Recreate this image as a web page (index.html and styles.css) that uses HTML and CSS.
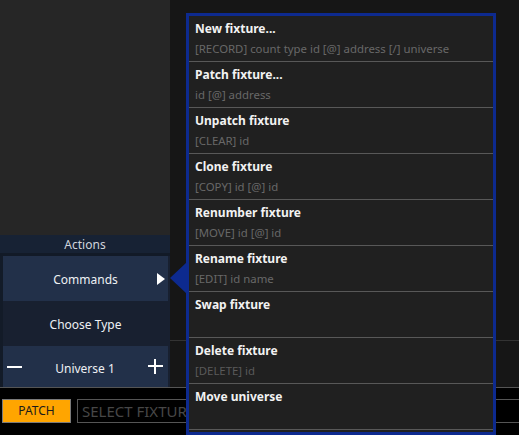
FILE: index.html
```html
<!DOCTYPE html>
<html>
<head>
<meta charset="utf-8">
<link rel="stylesheet" href="styles.css">
</head>
<body>
<div class="app">
  <div class="main">
    <div class="left">
      <div class="left-top"></div>
      <div class="actions">
        <div class="actions-head">Actions</div>
        <div class="actions-body">
          <div class="act act-hi">Commands<span class="tri"></span></div>
          <div class="act">Choose Type</div>
          <div class="act act-hi act-uni">
            <span class="minus"></span>
            <span>Universe 1</span>
            <span class="plus"></span>
          </div>
        </div>
      </div>
    </div>
    <div class="right">
      <div class="right-top"></div>
      <div class="right-bottom"></div>
    </div>
  </div>
  <div class="bottombar">
    <div class="patch">PATCH</div>
    <div class="select">SELECT FIXTURE</div>
  </div>
</div>

<div class="pointer"></div>
<div class="popup">
  <div class="item"><div class="t">New fixture...</div><div class="s">[RECORD] count type id [@] address [/] universe</div></div>
  <div class="item"><div class="t">Patch fixture...</div><div class="s">id [@] address</div></div>
  <div class="item"><div class="t">Unpatch fixture</div><div class="s">[CLEAR] id</div></div>
  <div class="item"><div class="t">Clone fixture</div><div class="s">[COPY] id [@] id</div></div>
  <div class="item"><div class="t">Renumber fixture</div><div class="s">[MOVE] id [@] id</div></div>
  <div class="item"><div class="t">Rename fixture</div><div class="s">[EDIT] id name</div></div>
  <div class="item"><div class="t">Swap fixture</div><div class="s"></div></div>
  <div class="item"><div class="t">Delete fixture</div><div class="s s-dim">[DELETE] id</div></div>
  <div class="item"><div class="t">Move universe</div><div class="s"></div></div>
</div>
</body>
</html>
```

FILE: styles.css
```css
* { box-sizing: border-box; }
html, body { margin: 0; padding: 0; }
body {
  width: 519px;
  height: 435px;
  overflow: hidden;
  background: #161616;
  font-family: "Noto Sans", "Open Sans", sans-serif;
  font-size: 12px;
  position: relative;
}
.app {
  display: grid;
  grid-template-rows: 387px 48px;
  height: 435px;
}
.main { display: flex; }
.left { width: 170px; display: flex; flex-direction: column; }
.left-top { flex: 1; background: #262626; }
.actions { height: 152px; background: #182030; display: flex; flex-direction: column; }
.actions-head {
  height: 21px;
  padding-top: 1px;
  line-height: 18px;
  text-align: center;
  color: #cfd4dc;
  background: #172234;
  border-bottom: 3px solid #121a27;
}
.actions-body {
  flex: 1;
  display: flex;
  flex-direction: column;
  border-left: 3px solid #131b28;
  padding-right: 2px;
}
.act {
  height: 45px;
  padding-top: 2px;
  display: flex;
  align-items: center;
  justify-content: center;
  color: #eef0f4;
  position: relative;
}
.act-hi { background: #223049; }
.act-uni { justify-content: space-between; padding: 4px 5px 0 4px; height: 41px; }
.tri {
  position: absolute;
  right: 3px;
  top: 17px;
  width: 0; height: 0;
  border-top: 6px solid transparent;
  border-bottom: 6px solid transparent;
  border-left: 8px solid #ffffff;
}
.minus { width: 15px; height: 2px; background: #fff; margin-top: -4px; }
.plus { width: 15px; height: 15px; position: relative; margin-top: -4px; }
.plus::before, .plus::after { content: ""; position: absolute; background: #fff; }
.plus::before { left: 0; top: 6px; width: 15px; height: 2px; }
.plus::after { left: 6px; top: 0; width: 2px; height: 15px; }

.right { flex: 1; display: flex; flex-direction: column; }
.right-top { height: 341px; background: #161616; border-bottom: 1px solid #333; }
.right-bottom { flex: 1; background: #161616; }

.bottombar {
  background: #000;
  border-top: 1px solid #555;
  display: flex;
  align-items: flex-start;
  padding: 11px 0 0 2px;
  gap: 6px;
}
.patch {
  width: 69px;
  height: 24px;
  background: #ffa500;
  border: 1px solid #7a7a7a;
  color: #1a1a1a;
  text-align: center;
  line-height: 22px;
  font-size: 12px;
}
.select {
  flex: 1;
  height: 24px;
  border: 1px solid #555;
  border-right: 0;
  color: #474747;
  font-size: 15px;
  line-height: 22px;
  padding-left: 4px;
}

.pointer {
  position: absolute;
  left: 170px;
  top: 262px;
  width: 0; height: 0;
  border-top: 16px solid transparent;
  border-bottom: 16px solid transparent;
  border-right: 17px solid #0d2a8f;
}
.popup {
  position: absolute;
  left: 186px;
  top: 13px;
  width: 310px;
  height: 422px;
  border: 3px solid #0d2a8f;
  background: #202020;
  display: flex;
  flex-direction: column;
}
.item {
  height: 46px;
  flex: none;
  border-bottom: 1px solid #585858;
  padding: 4px 6px 0;
}
.t { color: #f2f2f2; font-weight: bold; line-height: 18px; }
.s { color: #686868; line-height: 18px; height: 18px; margin-top: 2px; font-size: 11.4px; }
.s-dim { color: #5a5a5a; }
```
